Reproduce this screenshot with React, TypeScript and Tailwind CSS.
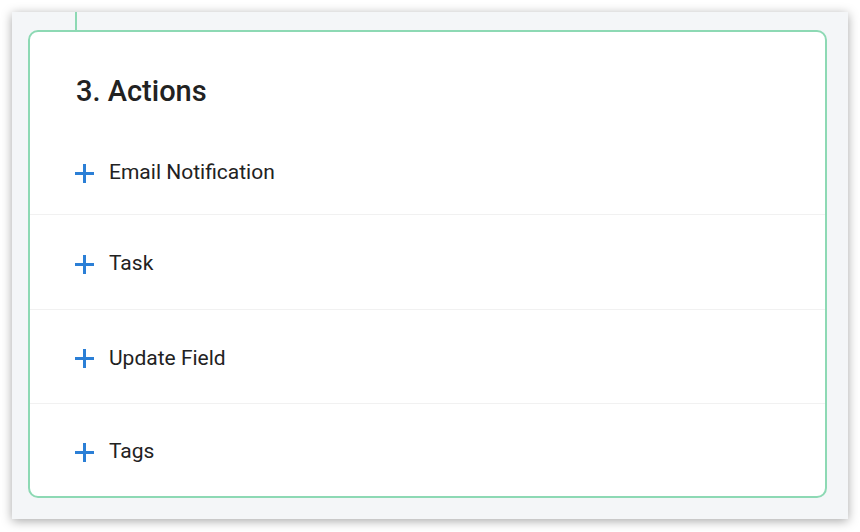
import React from 'react';

const actions = ['Email Notification', 'Task', 'Update Field', 'Tags'];
const rowHeights = ['h-[87px]', 'h-[95px]', 'h-[94px]', 'flex-1'];

const PlusIcon = () => (
  <svg width="19" height="19" viewBox="0 0 19 19" className="shrink-0">
    <rect x="0" y="8" width="19" height="3" fill="#2b7fd6" />
    <rect x="8" y="0" width="3" height="19" fill="#2b7fd6" />
  </svg>
);

export default function App() {
  return (
    <div className="w-[860px] h-[532px] bg-white pt-[12px] pl-[12px]" style={{ fontFamily: 'Roboto, "Liberation Sans", sans-serif' }}>
      <div className="w-[836px] h-[507px] bg-[#f4f6f8] shadow-[0_2px_10px_rgba(0,0,0,0.35)] flex flex-col">
        {/* connector line from previous step */}
        <div className="ml-[63px] w-[2px] h-[18px] bg-[#8dd9b4]" />
        <div className="ml-[16px] mr-[21px] h-[468px] bg-white border-2 border-[#8dd9b4] rounded-[10px] flex flex-col">
          <h2 className="pl-[46px] pt-[42px] text-[29px] leading-[35px] font-medium text-[#222]">3. Actions</h2>
          <div className="flex-1 flex flex-col mt-[19px]">
            {actions.map((a, i) => (
              <div
                key={a}
                className={`flex items-center gap-[15px] pl-[45px] pt-[4px] ${rowHeights[i]} ${i < actions.length - 1 ? 'border-b border-[#f1f1f1]' : ''}`}
              >
                <PlusIcon />
                <span className="text-[21px] text-[#222]">{a}</span>
              </div>
            ))}
          </div>
        </div>
      </div>
    </div>
  );
}
